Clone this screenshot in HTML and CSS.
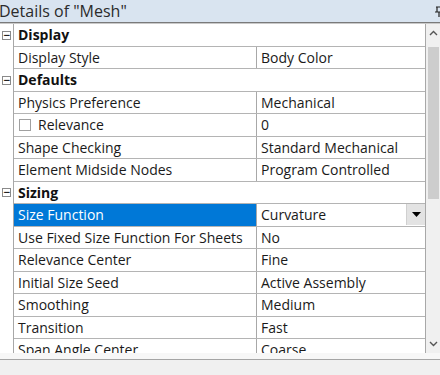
FILE: index.html
```html
<!DOCTYPE html>
<html>
<head>
<meta charset="utf-8">
<link rel="stylesheet" href="styles.css">
</head>
<body>
<div class="panel">
  <div class="title">
    <span class="title-text">Details of "Mesh"</span>
    <svg class="pin" width="10" height="12" viewBox="0 0 10 12"><path d="M2 1h6M3 1v5M7 1v5M1 6h8M5 6v5" stroke="#222" stroke-width="1.2" fill="none"/></svg>
  </div>
  <div class="main">
    <div class="grid">
      <div class="row cat"><div class="gut"><span class="box">−</span></div><div class="catname">Display</div></div>
      <div class="row"><div class="gut"></div><div class="name">Display Style</div><div class="val">Body Color</div></div>
      <div class="row cat"><div class="gut"><span class="box">−</span></div><div class="catname">Defaults</div></div>
      <div class="row"><div class="gut"></div><div class="name">Physics Preference</div><div class="val">Mechanical</div></div>
      <div class="row"><div class="gut"></div><div class="name"><span class="chk"></span>Relevance</div><div class="val">0</div></div>
      <div class="row"><div class="gut"></div><div class="name">Shape Checking</div><div class="val">Standard Mechanical</div></div>
      <div class="row"><div class="gut"></div><div class="name">Element Midside Nodes</div><div class="val">Program Controlled</div></div>
      <div class="row cat"><div class="gut"><span class="box">−</span></div><div class="catname">Sizing</div></div>
      <div class="row"><div class="gut"></div><div class="name sel">Size Function</div><div class="val drop"><span>Curvature</span><span class="dbtn"><svg width="9" height="5" viewBox="0 0 9 5"><path d="M0 0h9L4.5 5z" fill="#000"/></svg></span></div></div>
      <div class="row"><div class="gut"></div><div class="name">Use Fixed Size Function For Sheets</div><div class="val">No</div></div>
      <div class="row"><div class="gut"></div><div class="name">Relevance Center</div><div class="val">Fine</div></div>
      <div class="row"><div class="gut"></div><div class="name">Initial Size Seed</div><div class="val">Active Assembly</div></div>
      <div class="row"><div class="gut"></div><div class="name">Smoothing</div><div class="val">Medium</div></div>
      <div class="row"><div class="gut"></div><div class="name">Transition</div><div class="val">Fast</div></div>
      <div class="row"><div class="gut"></div><div class="name">Span Angle Center</div><div class="val">Coarse</div></div>
    </div>
    <div class="sbar">
      <svg class="arr" width="9" height="6" viewBox="0 0 9 6"><path d="M1 5L4.5 1.5L8 5" stroke="#555" stroke-width="1.4" fill="none"/></svg>
      <div class="track"><div class="thumb"></div></div>
      <svg class="arr" width="9" height="6" viewBox="0 0 9 6"><path d="M1 1L4.5 4.5L8 1" stroke="#555" stroke-width="1.4" fill="none"/></svg>
    </div>
  </div>
  <div class="gap"></div>
  <div class="foot"></div>
</div>
</body>
</html>
```
FILE: styles.css
```css
html, body {
  margin: 0;
  padding: 0;
}
body {
  width: 440px;
  height: 375px;
  overflow: hidden;
  background: #f0f0f0;
  font-family: "Open Sans", "Noto Sans", sans-serif;
  font-size: 14px;
  color: #1a1a1a;
}
.panel {
  display: flex;
  flex-direction: column;
  height: 375px;
}
.title {
  height: 22px;
  background: #d9e4f0;
  border-bottom: 1px solid #7a7a7a;
  display: flex;
  align-items: center;
  justify-content: space-between;
  font-size: 16px;
  color: #2b2b2b;
  flex: none;
}
.title-text {
  margin-left: -1px;
}
.pin {
  margin-right: -4px;
  margin-top: 1px;
}
.main {
  display: flex;
  height: 329px;
  flex: none;
  border-top: 1px solid #c9c9c9;
}
.grid {
  width: 425px;
  background: #fff;
  overflow: hidden;
  border-right: 1px solid #a8a8a8;
}
.row {
  display: flex;
  height: 22.5px;
  box-sizing: border-box;
  border-bottom: 1px solid #b4b4b4;
  margin-left: 14px;
}
.gut {
  width: 14px;
  margin-left: -14px;
  flex: none;
  display: flex;
  align-items: center;
  justify-content: center;
  background: #fff;
  border-right: 1px solid #a8a8a8;
  box-sizing: border-box;
  margin-bottom: -1px;
}
.box {
  width: 9px;
  height: 9px;
  border: 1px solid #8a8a8a;
  box-sizing: border-box;
  font-size: 9px;
  line-height: 6px;
  text-align: center;
  color: #222;
  font-family: "DejaVu Sans", sans-serif;
  font-weight: bold;
}
.catname {
  font-weight: bold;
  padding-left: 4px;
  display: flex;
  align-items: center;
  color: #111;
}
.name {
  width: 243px;
  flex: none;
  box-sizing: border-box;
  border-right: 1px solid #a8a8a8;
  padding-left: 4px;
  display: flex;
  align-items: center;
  white-space: nowrap;
  overflow: hidden;
}
.name.sel {
  background: #0078d7;
  color: #fff;
}
.val {
  flex: 1;
  padding-left: 4px;
  display: flex;
  align-items: center;
  white-space: nowrap;
}
.val.drop {
  justify-content: space-between;
  padding-right: 0;
}
.dbtn {
  width: 19px;
  height: 21px;
  background: #e3e3e3;
  border-left: 1px solid #d0d0d0;
  display: flex;
  align-items: center;
  justify-content: center;
  box-sizing: border-box;
}
.chk {
  width: 12px;
  height: 12px;
  border: 1px solid #a0a0a0;
  box-sizing: border-box;
  margin-left: 1px;
  margin-right: 7px;
  background: #fff;
}
.sbar {
  width: 14px;
  flex: none;
  background: #f0f0f0;
  display: flex;
  flex-direction: column;
  align-items: center;
}
.arr {
  margin: 6px 0;
  flex: none;
}
.track {
  flex: 1;
  width: 100%;
  padding-top: 5px;
}
.thumb {
  margin-left: 2px;
  width: 11px;
  height: 152px;
  background: #cdcdcd;
}
.gap {
  height: 6px;
  background: #f7f7f7;
  flex: none;
}
.foot {
  flex: 1;
  border-top: 1px solid #a5a5a5;
  background: #f0f0f0;
}
```
